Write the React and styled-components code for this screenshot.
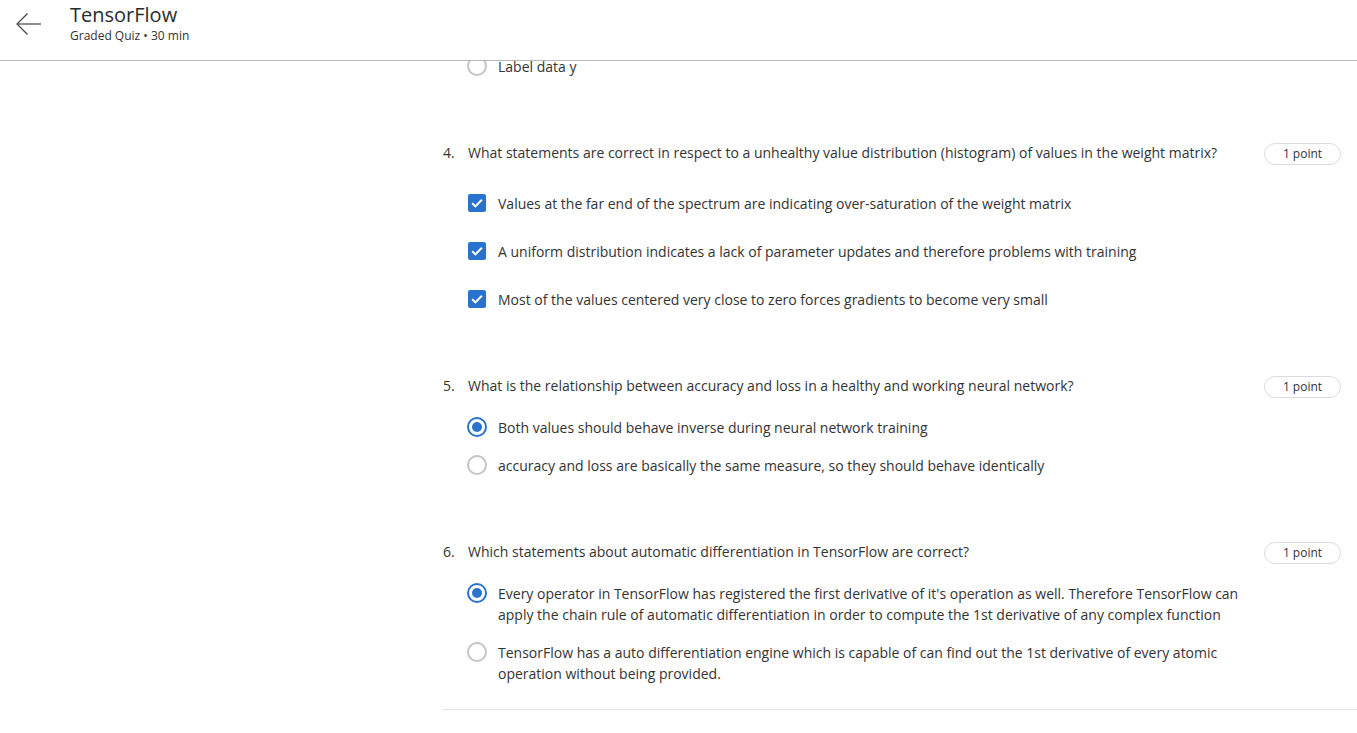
import React from 'react';
import styled, { createGlobalStyle } from 'styled-components';

const GlobalStyle = createGlobalStyle`
  html, body {
    margin: 0;
    padding: 0;
    background: #fff;
  }
  body {
    font-family: "Open Sans", "Noto Sans", Arial, sans-serif;
    color: #333;
    overflow: hidden;
  }
`

const Page = styled.div`
  height: 100vh;
  display: flex;
  flex-direction: column;
`

const Header = styled.header`
  height: 61px;
  box-sizing: border-box;
  border-bottom: 1px solid #b8b8b8;
  display: flex;
  align-items: flex-start;
  flex-shrink: 0;
`

const BackButton = styled.button`
  width: 56px;
  height: 48px;
  padding: 0 0 0 16px;
  border: 0;
  background: none;
  display: flex;
  align-items: center;
  cursor: pointer;
  color: #444;
`

const TitleBlock = styled.div`
  padding: 2px 0 0 14px;
`

const Title = styled.h1`
  margin: 0;
  font-size: 20px;
  font-weight: 400;
  line-height: 26px;
  color: #2b2b2b;
`

const Subtitle = styled.div`
  font-size: 12px;
  line-height: 16px;
  color: #333;
`

const Main = styled.main`
  flex: 1;
  overflow: hidden;
  display: flex;
`

const Column = styled.div`
  margin-left: 443px;
  flex: 1;
  margin-top: -5.5px;
`

const Question = styled.section`
  display: grid;
  grid-template-columns: 25px 1fr 77px;
  padding-right: 16px;
  & + & {
    margin-top: 65px;
  }
`

const Number = styled.div`
  grid-column: 1;
  font-size: 14px;
  line-height: 21px;
`

const Body = styled.div`
  grid-column: 2;
  min-width: 0;
`

const Prompt = styled.div`
  font-size: 14px;
  line-height: 21px;
`

const Points = styled.div`
  grid-column: 3;
  margin: 1px 0 0 20px;
  width: 77px;
  height: 22px;
  box-sizing: border-box;
  border: 1px solid #dcdcdc;
  border-radius: 11px;
  font-size: 12px;
  line-height: 20px;
  text-align: center;
  color: #333;
  justify-self: end;
`

const Options = styled.div`
  display: flex;
  flex-direction: column;
  gap: ${(props) => props.gap}px;
  margin-top: ${(props) => props.offset}px;
`

const Option = styled.label`
  display: flex;
  align-items: flex-start;
  gap: 11px;
  margin-left: -1px;
  font-size: 14px;
  line-height: 21px;
  cursor: pointer;
`

const Control = styled.span`
  width: 20px;
  height: 21px;
  flex-shrink: 0;
  display: flex;
  align-items: center;
  justify-content: center;
`

const Radio = styled.span`
  width: 20px;
  height: 20px;
  box-sizing: border-box;
  border-radius: 50%;
  border: 2px solid ${(props) => (props.checked ? '#2a73cc' : '#c4c4c4')};
  display: flex;
  align-items: center;
  justify-content: center;
  &::after {
    content: '';
    width: 10px;
    height: 10px;
    border-radius: 50%;
    background: ${(props) => (props.checked ? '#2a73cc' : 'transparent')};
  }
`

const Checkbox = styled.span`
  width: 18px;
  height: 18px;
  border-radius: 2px;
  background: #2a73cc;
  display: flex;
  align-items: center;
  justify-content: center;
`

const Divider = styled.hr`
  margin: 25.5px 0 0;
  border: 0;
  border-top: 1px solid #e1e1e1;
`

const questions = [
  {
    id: 3,
    tail: true,
    type: 'radio',
    options: [{ text: 'Label data y', checked: false }],
  },
  {
    id: 4,
    type: 'checkbox',
    prompt: 'What statements are correct in respect to a unhealthy value distribution (histogram) of values in the weight matrix?',
    options: [
      { text: 'Values at the far end of the spectrum are indicating over-saturation of the weight matrix', checked: true },
      { text: 'A uniform distribution indicates a lack of parameter updates and therefore problems with training', checked: true },
      { text: 'Most of the values centered very close to zero forces gradients to become very small', checked: true },
    ],
  },
  {
    id: 5,
    type: 'radio',
    prompt: 'What is the relationship between accuracy and loss in a healthy and working neural network?',
    options: [
      { text: 'Both values should behave inverse during neural network training', checked: true },
      { text: 'accuracy and loss are basically the same measure, so they should behave identically', checked: false },
    ],
  },
  {
    id: 6,
    type: 'radio',
    prompt: 'Which statements about automatic differentiation in TensorFlow are correct?',
    options: [
      { text: "Every operator in TensorFlow has registered the first derivative of it's operation as well. Therefore TensorFlow can apply the chain rule of automatic differentiation in order to compute the 1st derivative of any complex function", checked: true },
      { text: 'TensorFlow has a auto differentiation engine which is capable of can find out the 1st derivative of every atomic operation without being provided.', checked: false },
    ],
  },
]

const BackArrow = () => (
  <svg width="25" height="22" viewBox="0 0 25 22" fill="none" stroke="currentColor" strokeWidth="1.2">
    <path d="M1 11h24" />
    <path d="M11.5 0.5L1 11l10.5 10.5" />
  </svg>
)

const Check = () => (
  <svg width="14" height="14" viewBox="0 0 14 14" fill="none" stroke="#fff" strokeWidth="2">
    <path d="M2.2 7.2l3.2 3.2 6.4-6.6" />
  </svg>
)

const QuizOption = ({ type, text, checked }) => (
  <Option>
    <Control>
      {type === 'checkbox' ? (
        <Checkbox>{checked && <Check />}</Checkbox>
      ) : (
        <Radio checked={checked} />
      )}
    </Control>
    <span>{text}</span>
  </Option>
)

export default function App() {
  return (
    <React.Fragment>
      <GlobalStyle />
      <Page>
        <Header>
          <BackButton aria-label="Back">
            <BackArrow />
          </BackButton>
          <TitleBlock>
            <Title>TensorFlow</Title>
            <Subtitle>Graded Quiz • 30 min</Subtitle>
          </TitleBlock>
        </Header>
        <Main>
          <Column>
            {questions.map((q) => (
              <Question key={q.id}>
                {!q.tail && <Number>{q.id}.</Number>}
                <Body>
                  {q.prompt && <Prompt>{q.prompt}</Prompt>}
                  <Options
                    gap={q.type === 'checkbox' ? 27 : 17}
                    offset={q.tail ? 0 : q.type === 'checkbox' ? 30 : 21}
                  >
                    {q.options.map((o) => (
                      <QuizOption key={o.text} type={q.type} {...o} />
                    ))}
                  </Options>
                </Body>
                {!q.tail && <Points>1 point</Points>}
              </Question>
            ))}
            <Divider />
          </Column>
        </Main>
      </Page>
    </React.Fragment>
  )
}
